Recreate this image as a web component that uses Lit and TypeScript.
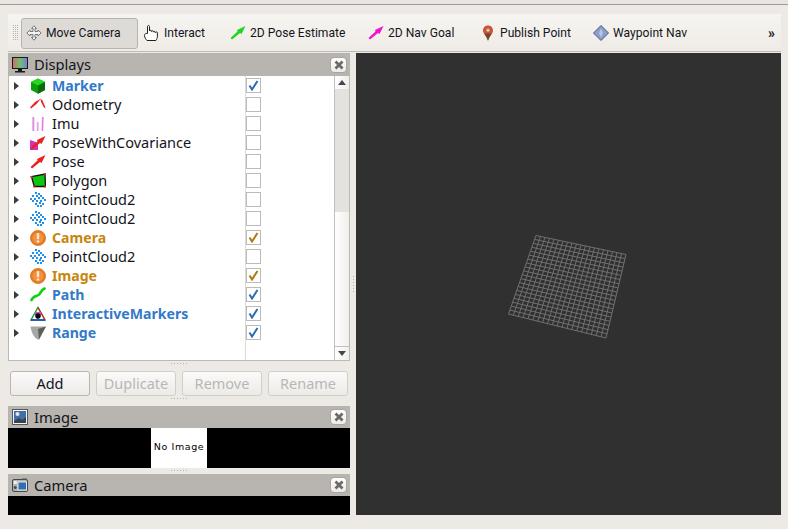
import {LitElement, html, css, svg} from 'lit';
import {customElement} from 'lit/decorators.js';

type Row = {name: string; icon: string; check?: boolean; tone?: string};

const rows: Row[] = [
  {name: 'Marker', icon: 'marker', check: true, tone: 'ok'},
  {name: 'Odometry', icon: 'odometry'},
  {name: 'Imu', icon: 'imu'},
  {name: 'PoseWithCovariance', icon: 'posecov'},
  {name: 'Pose', icon: 'pose'},
  {name: 'Polygon', icon: 'polygon'},
  {name: 'PointCloud2', icon: 'cloud'},
  {name: 'PointCloud2', icon: 'cloud'},
  {name: 'Camera', icon: 'warn', check: true, tone: 'warn'},
  {name: 'PointCloud2', icon: 'cloud'},
  {name: 'Image', icon: 'warn', check: true, tone: 'warn'},
  {name: 'Path', icon: 'path', check: true, tone: 'ok'},
  {name: 'InteractiveMarkers', icon: 'interactive', check: true, tone: 'ok'},
  {name: 'Range', icon: 'range', check: true, tone: 'ok'},
];

const cloudDots = [
  [5, 0], [8, 1], [2, 3], [6, 3], [10, 3], [0, 6], [4, 6], [8, 5], [12, 5],
  [2, 8], [6, 8], [10, 8], [14, 7], [5, 11], [9, 10], [12, 11], [7, 13], [10, 13],
];

const arrowPath = 'M0.5 13 7.5 6.5 7 5 15.5 1 11.5 9 10 8 2 14.5z';

function rowIcon(kind: string) {
  switch (kind) {
    case 'marker':
      return svg`<path d="M8 0.5 15 4v8l-7 3.7L1 12V4z" fill="#0ba00b"/>
        <path d="M8 0.5 15 4 8 7.6 1 4z" fill="#22d822"/>
        <path d="M8 7.6 15 4v8l-7 3.7z" fill="#066e06"/>`;
    case 'odometry':
      return svg`<path d="M0 10.5 5 5 11 1.5 6.5 7 1 11.5z" fill="#e8241c"/>
        <path d="M10.5 1.5 12.5 3.5 15.5 10.5 14.3 11 11 5z" fill="#e8241c"/>`;
    case 'imu':
      return svg`<path d="M3.5 1v14M7.7 6v9M12.8 1l-.4 14" stroke="#e7a3e6" stroke-width="1.8" fill="none"/>
        <path d="M3 1v14M12.8 1l-.4 14" stroke="#cf63d0" stroke-width=".6" fill="none"/>`;
    case 'posecov':
      return svg`<path d="M0 5 6 7 8 10 8 15H0z" fill="#cf33c2"/>
        <path d=${arrowPath} fill="#e8241c"/>`;
    case 'pose':
      return svg`<path d=${arrowPath} fill="#e8241c"/>`;
    case 'polygon':
      return svg`<path d="M1.5 3.7 15 1 15.5 13.5 4.3 13.5z" fill="#0fc60f" stroke="#111" stroke-width="1.3"/>
        <path d="M0.5 3h2v2h-2zM14 0h2v2h-2zM14.5 12.5h2v2h-2zM3.3 12.5h2v2h-2z" fill="#e8241c"/>`;
    case 'cloud':
      return svg`${cloudDots.map(([x, y]) => svg`<rect x=${x} y=${y} width="2" height="2" fill="#1e90f0"/>`)}`;
    case 'warn':
      return svg`<circle cx="8" cy="8" r="7.6" fill="#e9781e" stroke="#c9630f" stroke-width=".6"/>
        <circle cx="8" cy="8" r="5.6" fill="#f2923c"/>
        <rect x="6.8" y="3.2" width="2.4" height="6" fill="#fbe7d3"/>
        <rect x="6.8" y="10.4" width="2.4" height="2.2" fill="#fbe7d3"/>`;
    case 'path':
      return svg`<path d="M1.5 13C3 9 6 9.5 8.5 8s2-5 6-6.5" stroke="#0bd00b" stroke-width="2.6" fill="none" stroke-linecap="round"/>`;
    case 'interactive':
      return svg`<path d="M8 1.5 15 14H1z" fill="none" stroke="#1ea01e" stroke-width="1.4"/>
        <path d="M1 14h14" stroke="#2040e0" stroke-width="1.6"/>
        <path d="M8 1.5 15 14" stroke="#e02020" stroke-width="1.2"/>
        <path d="M5 6h6v3l-3 4-3-4z" fill="#dd44dd"/>
        <circle cx="8" cy="10" r="2.7" fill="#050505"/>`;
    case 'range':
      return svg`<path d="M0.5 1.5H16L9 14.5C5 15 1 7 0.5 1.5z" fill="#a6a6a4"/>
        <path d="M8 4 16 1.5 9 14.5z" fill="#5e5e5c"/>`;
  }
  return svg``;
}

@customElement('dock-title')
export class DockTitle extends LitElement {
  static override properties = {label: {}, kind: {}, tall: {type: Boolean, reflect: true}};
  label = '';
  kind = '';
  tall = false;

  static override styles = css`
    :host {
      display: flex;
      align-items: center;
      height: 22px;
      background: #b8b4af;
      color: #14141c;
      font-size: 14.7px;
      padding: 0 3px 0 4px;
    }
    :host([tall]) {
      height: 23px;
    }
    .icon {
      width: 16px;
      height: 16px;
      margin-right: 6px;
      flex: none;
    }
    .label {
      flex: 1;
      padding-bottom: 1px;
    }
    .close {
      width: 15px;
      height: 14px;
      border: 1px solid #a9a6a1;
      border-radius: 4px;
      background: linear-gradient(#ffffff, #ecebe8);
      display: flex;
      align-items: center;
      justify-content: center;
    }
  `;

  private icon() {
    if (this.kind === 'monitor') {
      return svg`<defs><linearGradient id="scr"><stop offset="0" stop-color="#d06a6a"/><stop offset=".5" stop-color="#6ec26e"/><stop offset="1" stop-color="#7a78d8"/></linearGradient></defs>
        <rect x="0.5" y="0.5" width="15" height="11" fill="url(#scr)" stroke="#1a1a1a"/>
        <path d="M6 12h4v2H6zM3 14h10v1.5H3z" fill="#1a1a1a"/>`;
    }
    if (this.kind === 'image') {
      return svg`<rect x="0.5" y="0.5" width="15" height="15" fill="#f4f4f2" stroke="#55585c"/>
        <rect x="2" y="2" width="12" height="12" fill="#3f70a8"/>
        <circle cx="5.5" cy="5" r="2" fill="#dfe8f2"/>
        <path d="M2 12 7 9l3 2 4-3v6H2z" fill="#39424c"/>`;
    }
    return svg`<rect x="0.5" y="2.5" width="15" height="12" rx="1.5" fill="#b4b4b2" stroke="#45474a"/>
      <rect x="6" y="5" width="8.5" height="8" fill="#2f70b5" stroke="#e8e8e8"/>
      <rect x="1.8" y="4" width="3" height="3" fill="#f0f0f0"/>
      <circle cx="3.2" cy="10.5" r="1.6" fill="#4a4c4e"/>
      <path d="M10 2.5h5v-1h-5z" fill="#55585c"/>`;
  }

  override render() {
    return html`<svg class="icon" viewBox="0 0 16 16">${this.icon()}</svg>
      <span class="label">${this.label}</span>
      <div class="close">
        <svg width="10" height="10" viewBox="0 0 10 10">
          <path d="M1.5 1.5 8.5 8.5M8.5 1.5 1.5 8.5" stroke="#6a6a68" stroke-width="2.8"/>
        </svg>
      </div>`;
  }
}

@customElement('app-root')
export class AppRoot extends LitElement {
  static override styles = css`
    :host {
      display: flex;
      flex-direction: column;
      height: 529px;
      width: 788px;
      overflow: hidden;
      background: #edeae5;
      font-family: 'Noto Sans', 'Open Sans', sans-serif;
      font-size: 14px;
      color: #14141c;
    }
    .topline {
      height: 4px;
      flex: none;
      border-bottom: 1px solid #9c9c9a;
      background: #e8e5e0;
    }
    .toolbar {
      margin: 9px 7px 0 8px;
      height: 36px;
      padding-top: 1px;
      flex: none;
      display: grid;
      grid-template-columns: 13px 118px 86px 138px 112px 113px 1fr 22px;
      align-items: center;
      background: linear-gradient(#f6f4f0, #efece7);
      border-bottom: 1px solid #bfbcb7;
      font-family: Roboto, 'Noto Sans', sans-serif;
      font-size: 12.1px;
    }
    .grip {
      width: 5px;
      height: 16px;
      margin-left: 5px;
      background: radial-gradient(circle at 0.5px 0.5px, #b5b1ac 0.6px, transparent 0.8px) 0 0 / 2px 2px;
    }
    .tool {
      display: flex;
      align-items: center;
      gap: 4px;
      height: 31px;
      padding-left: 5px;
      white-space: nowrap;
      box-sizing: border-box;
    }
    .tool svg {
      width: 16px;
      height: 16px;
      flex: none;
    }
    .tool.active {
      width: 117px;
      background: #dedad5;
      border: 1px solid #b7b3ae;
      border-radius: 3px;
      padding-left: 4px;
    }
    .more {
      font-size: 14px;
      font-weight: 700;
      letter-spacing: -1px;
      padding-left: 9px;
    }
    .main {
      flex: none;
      height: 462px;
      margin: 1px 7px 0 8px;
      display: grid;
      grid-template-columns: 342px 6px 425px;
    }
    .left {
      display: flex;
      flex-direction: column;
    }
    .tree {
      height: 285px;
      flex: none;
      box-sizing: border-box;
      border: 1px solid #bdbab5;
      border-top: 0;
      background: #fff;
      display: grid;
      grid-template-columns: 1fr 15px;
    }
    .table {
      position: relative;
      overflow: hidden;
    }
    .table::after {
      content: '';
      position: absolute;
      left: 236px;
      top: 0;
      bottom: 0;
      width: 1px;
      background: #dcdad6;
    }
    .row {
      display: flex;
      align-items: center;
      height: 19px;
      font-size: 14.5px;
      white-space: nowrap;
    }
    .row .arrow {
      width: 0;
      height: 0;
      margin-left: 5px;
      border-left: 5px solid #3c3c3c;
      border-top: 4.5px solid transparent;
      border-bottom: 4.5px solid transparent;
    }
    .row svg {
      width: 16px;
      height: 16px;
      margin: 0 6px 0 11px;
      flex: none;
    }
    .row .name {
      width: 194px;
      flex: none;
      padding-bottom: 2px;
    }
    .row.ok .name {
      color: #337ac8;
      font-weight: 700;
      font-size: 14.1px;
      padding-bottom: 0;
    }
    .row.warn .name {
      color: #c6860f;
      font-weight: 700;
      font-size: 14.1px;
      padding-bottom: 0;
    }
    .box {
      width: 13px;
      height: 13px;
      border: 1px solid #bdbbb7;
      background: #fff;
      display: flex;
      align-items: center;
      justify-content: center;
      flex: none;
    }
    .row .box svg {
      width: 11px;
      height: 11px;
      margin: 0;
    }
    .scroll {
      display: flex;
      flex-direction: column;
      border-left: 1px solid #c2bfba;
      background: linear-gradient(to right, #ffffff, #f1efec);
    }
    .scroll .btn {
      height: 13px;
      flex: none;
      display: flex;
      align-items: center;
      justify-content: center;
    }
    .scroll .btn.down {
      border-top: 1px solid #c2bfba;
    }
    .scroll .thumb {
      height: 123px;
      flex: none;
      background: #e3e2de;
    }
    .scroll .fill {
      flex: 1;
    }
    .tri-up,
    .tri-down {
      width: 0;
      height: 0;
      border-left: 4.5px solid transparent;
      border-right: 4.5px solid transparent;
    }
    .tri-up {
      border-bottom: 5px solid #45474a;
    }
    .tri-down {
      border-top: 5px solid #45474a;
    }
    .handle {
      flex: none;
      display: flex;
      justify-content: center;
      padding-top: 2px;
      box-sizing: border-box;
    }
    .handle i {
      width: 16px;
      height: 1px;
      background: repeating-linear-gradient(to right, #b5b1ac 0 1px, transparent 1px 3px);
    }
    .h10 {
      height: 10px;
    }
    .h6 {
      height: 6px;
    }
    .buttons {
      flex: none;
      display: flex;
      gap: 6px;
      padding: 0 2px;
      height: 25px;
    }
    .buttons div {
      width: 80px;
      box-sizing: border-box;
      border: 1px solid #bab7b2;
      border-radius: 3px;
      background: linear-gradient(#fbfaf9, #ecebe8);
      display: flex;
      align-items: center;
      justify-content: center;
      font-size: 14.5px;
      padding-bottom: 2px;
    }
    .buttons .off {
      color: #b9b7b3;
      border-color: #d2cfca;
    }
    .image {
      height: 40px;
      flex: none;
      background: #000;
      display: flex;
      justify-content: center;
    }
    .noimage {
      width: 56px;
      box-sizing: border-box;
      padding-bottom: 3px;
      background: #fff;
      color: #000;
      font-family: 'DejaVu Sans', sans-serif;
      font-size: 9.5px;
      letter-spacing: 0.6px;
      display: flex;
      align-items: center;
      justify-content: center;
      white-space: nowrap;
    }
    .camera {
      height: 19px;
      flex: none;
      background: #000;
    }
    .split {
      display: flex;
      align-items: center;
      justify-content: center;
    }
    .split i {
      width: 1px;
      height: 16px;
      background: repeating-linear-gradient(to bottom, #b5b1ac 0 1px, transparent 1px 3px);
    }
    .view {
      background: #303030;
      display: block;
    }
  `;

  // ground grid, 20 cells, corners measured off the view
  private grid() {
    const tl = [180, 182.5], tr = [270, 201.5], br = [250, 285], bl = [152.5, 261];
    const mix = (a: number[], b: number[], t: number) => [a[0] + (b[0] - a[0]) * t, a[1] + (b[1] - a[1]) * t];
    const lines = [];
    for (let i = 0; i <= 20; i++) {
      const t = i / 20;
      const [x1, y1] = mix(tl, tr, t), [x2, y2] = mix(bl, br, t);
      const [x3, y3] = mix(tl, bl, t), [x4, y4] = mix(tr, br, t);
      lines.push(svg`<line x1=${x1} y1=${y1} x2=${x2} y2=${y2}/><line x1=${x3} y1=${y3} x2=${x4} y2=${y4}/>`);
    }
    return lines;
  }

  override render() {
    return html`
      <div class="topline"></div>
      <div class="toolbar">
        <div class="grip"></div>
        <div class="tool active">
          <svg viewBox="0 0 16 16" fill="#f4f4f4" stroke="#777" stroke-width="1">
            <path d="M8 .8 10.5 3.5H9V6.5H12V5L15.2 8 12 11V9.5H9v3h1.5L8 15.2 5.5 12.5H7v-3H4V11L.8 8 4 5v1.5h3v-3H5.5z"/>
          </svg>
          Move Camera
        </div>
        <div class="tool">
          <svg viewBox="0 0 16 16" fill="#fff" stroke="#222" stroke-width="1">
            <path d="M3.5 8.5V1.5c0-1.3 2-1.3 2 0V6c0-1 1.9-1 1.9 0v.5c0-1 1.9-1 1.9 0v.6c0-1 1.9-1 1.9 0v.6c0-1 2.2-1 2.2 0V11c0 2-.8 3.5-1.5 4.5H3C1.800 14 .5 12.500.5 10.500c0-1.500 1-2.300 3-2z"/>
          </svg>
          Interact
        </div>
        <div class="tool">
          <svg viewBox="0 0 16 16"><path d=${arrowPath} fill="#22d422"/></svg>
          2D Pose Estimate
        </div>
        <div class="tool">
          <svg viewBox="0 0 16 16"><path d=${arrowPath} fill="#ee14d0"/></svg>
          2D Nav Goal
        </div>
        <div class="tool">
          <svg viewBox="0 0 16 16">
            <path d="M8 .5C4.8.5 3 2.8 3 5.4 3 8.5 6.4 11 8 15.8 9.6 11 13 8.5 13 5.4 13 2.8 11.2.5 8 .5z" fill="#c8553a"/>
            <path d="M8 15.8C7 12 5 10 4.5 8.5h7C11 10 9 12 8 15.8z" fill="#6a4a30"/>
            <circle cx="8" cy="5.2" r="1.6" fill="#ecc4a8"/>
          </svg>
          Publish Point
        </div>
        <div class="tool">
          <svg viewBox="0 0 16 16">
            <path d="M8 .5 15.5 8 8 15.5.5 8z" fill="#8a9fc9" stroke="#4a5a86"/>
            <path d="M8 3.5 10 8l-2 4.5L6 8z" fill="#b8c6e2"/>
          </svg>
          Waypoint Nav
        </div>
        <div class="more">»</div>
      </div>
      <div class="main">
        <div class="left">
          <dock-title label="Displays" kind="monitor" tall></dock-title>
          <div class="tree">
            <div class="table">
              ${rows.map(
                (r) => html`<div class="row ${r.tone ?? ''}">
                  <span class="arrow"></span>
                  <svg viewBox="0 0 16 16">${rowIcon(r.icon)}</svg>
                  <span class="name">${r.name}</span>
                  <span class="box">
                    ${r.check
                      ? html`<svg viewBox="0 0 11 11">
                          <path d="M1.5 5.5 4 9.5 9.5 1" fill="none" stroke=${r.tone === 'warn' ? '#b07a10' : '#2a6db5'} stroke-width="2"/>
                        </svg>`
                      : ''}
                  </span>
                </div>`
              )}
            </div>
            <div class="scroll">
              <div class="btn"><span class="tri-up"></span></div>
              <div class="thumb"></div>
              <div class="fill"></div>
              <div class="btn down"><span class="tri-down"></span></div>
            </div>
          </div>
          <div class="handle h10"><i></i></div>
          <div class="buttons">
            <div>Add</div>
            <div class="off">Duplicate</div>
            <div class="off">Remove</div>
            <div class="off">Rename</div>
          </div>
          <div class="handle h10"><i></i></div>
          <dock-title label="Image" kind="image"></dock-title>
          <div class="image"><div class="noimage">No Image</div></div>
          <div class="handle h6"><i></i></div>
          <dock-title label="Camera" kind="camera"></dock-title>
          <div class="camera"></div>
        </div>
        <div class="split"><i></i></div>
        <svg class="view" width="425" height="462" viewBox="0 0 425 462" fill="none" stroke="#707070" stroke-width="1">
          ${this.grid()}
        </svg>
      </div>
    `;
  }
}
